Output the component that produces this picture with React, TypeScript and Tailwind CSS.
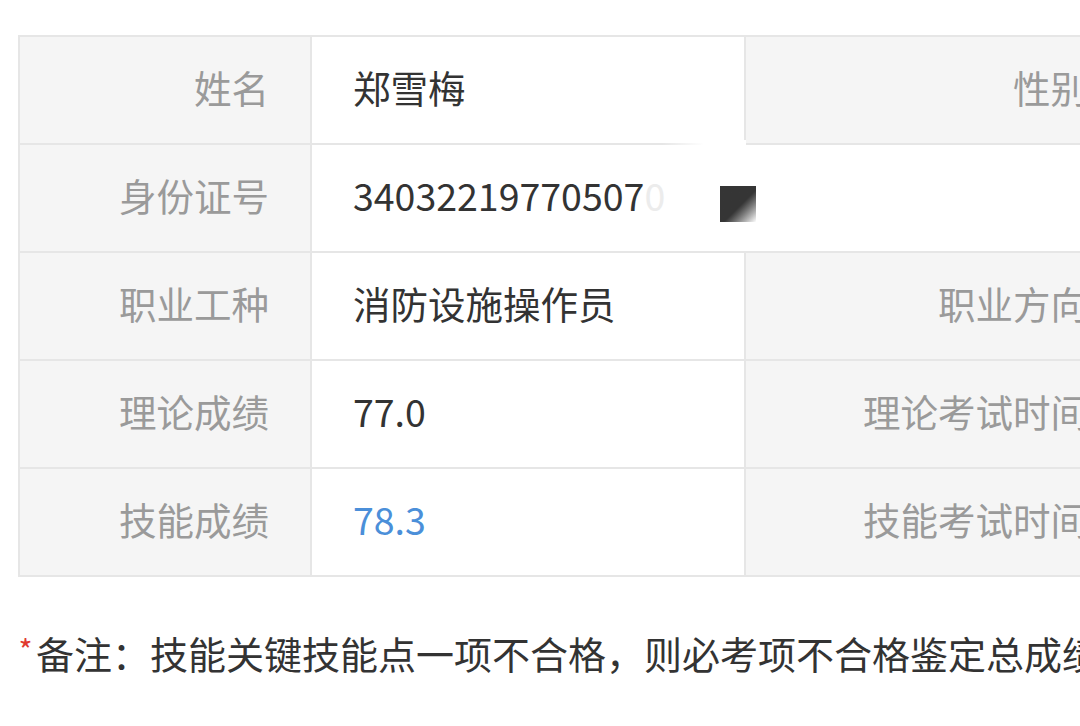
import React from "react";

const font = { fontFamily: '"Noto Sans CJK SC", "Noto Sans", sans-serif' };

function Label({ children }: { children: React.ReactNode }) {
  return (
    <div className="flex items-center justify-end pr-[41px] pb-[6px] bg-[#f5f5f5] border-r-2 border-[#e6e6e6] text-[#9a9a9a] text-[37.5px] leading-none">
      {children}
    </div>
  );
}

function Value({ children, blue = false }: { children: React.ReactNode; blue?: boolean }) {
  return (
    <div
      className={
        blue
          ? "flex items-center pl-[41px] pb-[6px] bg-white border-r-2 border-[#e6e6e6] text-[#4b8fd9] text-[37.5px] leading-none"
          : "flex items-center pl-[41px] pb-[6px] bg-white border-r-2 border-[#e6e6e6] text-[#333333] text-[37.5px] leading-none"
      }
    >
      {children}
    </div>
  );
}

function Row({ children }: { children: React.ReactNode }) {
  return (
    <div className="grid grid-cols-[292px_434px_385px_300px] h-[108px] border-b-2 border-[#e6e6e6]">
      {children}
    </div>
  );
}

export default function App() {
  return (
    <div className="relative w-[1080px] h-[726px] overflow-hidden bg-white" style={font}>
      <div className="pt-[35px] pl-[18px]">
        <div className="w-[1413px] border-t-2 border-l-2 border-[#e6e6e6]">
          <Row>
            <Label>姓名</Label>
            <Value>郑雪梅</Value>
            <Label>性别</Label>
            <Value>女</Value>
          </Row>
          <div className="grid grid-cols-[292px_1121px] h-[108px] border-b-2 border-[#e6e6e6]">
            <Label>身份证号</Label>
            <div className="flex items-center pl-[41px] pb-[6px] bg-white text-[#333333] text-[37.5px] leading-none">
              <span>34032219770507</span>
              <span className="text-[#ececec]">0</span>
            </div>
          </div>
          <Row>
            <Label>职业工种</Label>
            <Value>消防设施操作员</Value>
            <Label>职业方向</Label>
            <Value>无</Value>
          </Row>
          <Row>
            <Label>理论成绩</Label>
            <Value>77.0</Value>
            <Label>理论考试时间</Label>
            <Value>2023</Value>
          </Row>
          <Row>
            <Label>技能成绩</Label>
            <Value blue>78.3</Value>
            <Label>技能考试时间</Label>
            <Value>2023</Value>
          </Row>
        </div>
      </div>

      <div className="mt-[56px] pl-[15px] h-[40px] leading-[40px] text-[38px] text-[#333333] whitespace-nowrap">
        <span className="inline-block w-[21px] pt-[1px] text-center align-top text-[30px] leading-[30px] text-[#e0392f]">*</span>
        <span>备注：技能关键技能点一项不合格，则必考项不合格鉴定总成绩不合格</span>
      </div>

      {/* redaction overlay */}
      <div className="absolute left-[662px] top-[140px] w-[84px] h-[8px] bg-linear-to-r from-white/0 via-white to-white" />
      <div className="absolute left-[670px] top-[178px] w-[50px] h-[46px] bg-white" />
      <div className="absolute left-[720px] top-[186px] w-[36px] h-[36px] bg-linear-to-br from-[#353535] from-55% to-white" />
    </div>
  );
}
